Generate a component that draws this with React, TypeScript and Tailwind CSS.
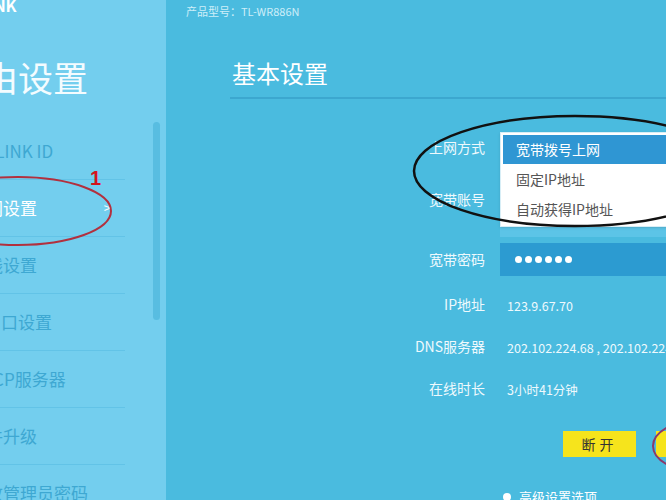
import React from 'react'

const font = { fontFamily: '"Noto Sans CJK SC", "Noto Sans", sans-serif' }

const menu = [
  { label: 'TP-LINK ID', active: false },
  { label: '上网设置', active: true },
  { label: '无线设置', active: false },
  { label: 'LAN口设置', active: false },
  { label: 'DHCP服务器', active: false },
  { label: '软件升级', active: false },
  { label: '修改管理员密码', active: false },
]

function Sidebar() {
  return (
    <aside className="flex h-full w-[166px] shrink-0 overflow-hidden bg-[#73ceee]">
      <div className="flex w-[153px] flex-col">
        <div className="ml-[-47px] mt-[-3px] h-[16px] shrink-0 text-[16px] font-bold leading-[16px] text-white">TP-LINK</div>
        <div className="ml-[-52px] mt-[44px] h-[40px] shrink-0 whitespace-nowrap text-[35px] leading-[40px] text-[#f4fcff]">路由设置</div>
        <ul className="mt-[26px] flex shrink-0 flex-col">
          {menu.map((item) => (
            <li
              key={item.label}
              className="flex h-[57px] w-[125px] shrink-0 items-center justify-between border-b border-[#62c3e7] pr-[14px]"
            >
              <span
                className={`ml-[-31px] whitespace-nowrap text-[17px] ${
                  item.active ? 'text-white' : 'text-[#3ea8d2]'
                }`}
              >
                {item.label}
              </span>
              {item.active && <span className="text-[13px] text-white">&gt;</span>}
            </li>
          ))}
        </ul>
      </div>
      <div className="w-[7px] pt-[122px]">
        <div className="h-[198px] rounded-sm bg-[#58bde1]" />
      </div>
    </aside>
  )
}

function Row({ label, children, h }: { label: string; children: React.ReactNode; h: string }) {
  return (
    <div className={`flex shrink-0 ${h}`}>
      <div className="w-[334px] shrink-0 pr-[15px] text-right text-[14px] text-[#eef9fd]">{label}</div>
      <div className="flex-1">{children}</div>
    </div>
  )
}

function Main() {
  return (
    <main className="relative h-full flex-1 overflow-hidden bg-[#4abbdf]">
      <div className="ml-[20px] pt-[3px] text-[11px] leading-[17px] text-[#cdeef9]">产品型号：TL-WR886N</div>
      <div className="ml-[66px] mt-[38px] text-[24px] leading-[30px] text-white">基本设置</div>
      <div className="ml-[64px] mt-[9px] h-[2px] bg-[#3ca7cf]" />

      <div className="mt-[33px] flex flex-col">
        <div className="relative">
          <Row label="上网方式" h="h-[30px] items-center">
            <div />
          </Row>
          <div className="absolute left-[334px] top-0 z-10 w-[200px] border border-[#d8eef6] bg-white p-[2px] shadow-sm">
            <div className="flex h-[29px] items-center bg-[#2f96d3] pl-[13px] text-[14px] text-white">宽带拨号上网</div>
            <div className="flex h-[30px] items-center pl-[13px] text-[14px] text-[#555]">固定IP地址</div>
            <div className="flex h-[30px] items-center pl-[13px] text-[14px] text-[#555]">自动获得IP地址</div>
          </div>
        </div>
        <div className="mt-[27px]">
          <Row label="宽带账号" h="h-[48px] items-start">
            <div className="h-[48px] bg-[#5cc4e7]" />
          </Row>
        </div>
        <div className="mt-[6px]">
          <Row label="宽带密码" h="h-[33px] items-center">
            <div className="flex h-[33px] items-center gap-[3px] bg-[#2c9bd1] pl-[15px]">
              {[0, 1, 2, 3, 4, 5].map((i) => (
                <span key={i} className="h-[7px] w-[7px] rounded-full bg-white" />
              ))}
            </div>
          </Row>
        </div>
        <div className="mt-[7px]">
          <Row label="IP地址" h="h-[42px] items-center">
            <span className="pl-[7px] text-[12.5px] text-[#eef9fd]">123.9.67.70</span>
          </Row>
          <Row label="DNS服务器" h="h-[42px] items-center">
            <span className="whitespace-nowrap pl-[7px] text-[12.5px] text-[#eef9fd]">202.102.224.68 , 202.102.224.68</span>
          </Row>
          <Row label="在线时长" h="h-[42px] items-center">
            <span className="pl-[7px] text-[12.5px] text-[#eef9fd]">3小时41分钟</span>
          </Row>
        </div>
        <div className="ml-[397px] mt-[22px] flex shrink-0 gap-[20px]">
          <button className="flex h-[26px] w-[73px] shrink-0 items-center justify-center bg-[#f6e41c] text-[14px] tracking-[4px] text-[#333]">
            断开
          </button>
          <button className="flex h-[26px] w-[73px] shrink-0 items-center justify-center bg-[#f6e41c] text-[14px] tracking-[4px] text-[#333]">
            连接
          </button>
        </div>
        <div className="ml-[337px] mt-[30px] flex shrink-0 items-center gap-[8px] text-[13px] text-white">
          <span className="h-[8px] w-[8px] shrink-0 rounded-full bg-white" />
          <span className="whitespace-nowrap">高级设置选项</span>
        </div>
      </div>
    </main>
  )
}

export default function App() {
  return (
    <div className="relative flex h-[500px] w-[666px] overflow-hidden" style={font}>
      <Sidebar />
      <Main />
      {/* annotation marks drawn over the screenshot */}
      <svg className="pointer-events-none absolute left-0 top-0 z-20" width="666" height="500">
        <ellipse cx="18" cy="211" rx="93" ry="34" fill="none" stroke="#b2303e" strokeWidth="2" />
        <ellipse cx="575" cy="171" rx="161" ry="55" fill="none" stroke="#111" strokeWidth="2.5" />
        <ellipse cx="700" cy="446" rx="47" ry="26" fill="none" stroke="#8b3a6c" strokeWidth="2" />
        <text x="90" y="185" fill="#d4141c" fontSize="20" fontWeight="bold" fontFamily="Liberation Sans, sans-serif">
          1
        </text>
      </svg>
    </div>
  )
}
